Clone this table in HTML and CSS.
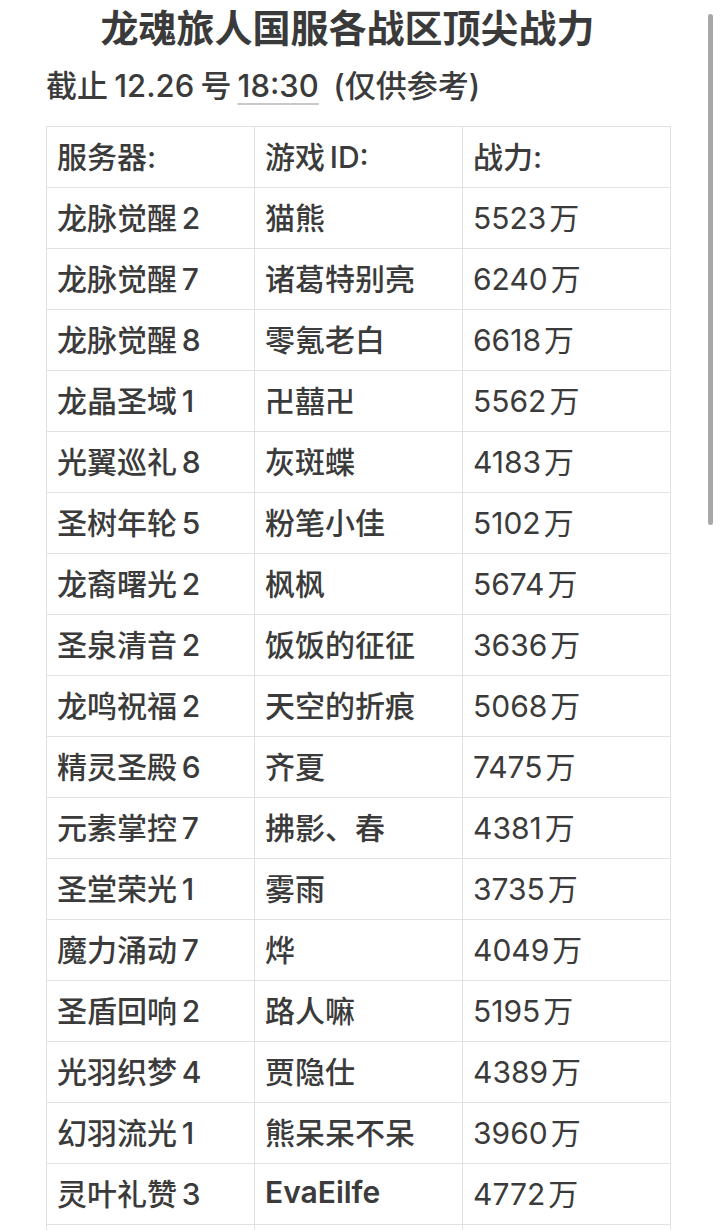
FILE: index.html
```html
<!DOCTYPE html>
<html lang="zh-CN">
<head>
<meta charset="utf-8">
<title>龙魂旅人国服各战区顶尖战力</title>
<link rel="stylesheet" href="styles.css">
</head>
<body>
<main class="page">
  <h1 class="title">龙魂旅人国服各战区顶尖战力</h1>
  <p class="subtitle">截止<span class="gap">12.26</span>号<span class="gap time">18:30</span> (仅供参考)</p>
  <table class="rank">
    <thead>
      <tr><th>服务器:</th><th>游戏<span class="gl">ID:</span></th><th>战力:</th></tr>
    </thead>
    <tbody>
      <tr><td>龙脉觉醒<span class="gl">2</span></td><td>猫熊</td><td><span class="gr">5523</span>万</td></tr>
      <tr><td>龙脉觉醒<span class="gl">7</span></td><td>诸葛特别亮</td><td><span class="gr">6240</span>万</td></tr>
      <tr><td>龙脉觉醒<span class="gl">8</span></td><td>零氪老白</td><td><span class="gr">6618</span>万</td></tr>
      <tr><td>龙晶圣域<span class="gl">1</span></td><td>卍囍卍</td><td><span class="gr">5562</span>万</td></tr>
      <tr><td>光翼巡礼<span class="gl">8</span></td><td>灰斑蝶</td><td><span class="gr">4183</span>万</td></tr>
      <tr><td>圣树年轮<span class="gl">5</span></td><td>粉笔小佳</td><td><span class="gr">5102</span>万</td></tr>
      <tr><td>龙裔曙光<span class="gl">2</span></td><td>枫枫</td><td><span class="gr">5674</span>万</td></tr>
      <tr><td>圣泉清音<span class="gl">2</span></td><td>饭饭的征征</td><td><span class="gr">3636</span>万</td></tr>
      <tr><td>龙鸣祝福<span class="gl">2</span></td><td>天空的折痕</td><td><span class="gr">5068</span>万</td></tr>
      <tr><td>精灵圣殿<span class="gl">6</span></td><td>齐夏</td><td><span class="gr">7475</span>万</td></tr>
      <tr><td>元素掌控<span class="gl">7</span></td><td>拂影、春</td><td><span class="gr">4381</span>万</td></tr>
      <tr><td>圣堂荣光<span class="gl">1</span></td><td>雾雨</td><td><span class="gr">3735</span>万</td></tr>
      <tr><td>魔力涌动<span class="gl">7</span></td><td>烨</td><td><span class="gr">4049</span>万</td></tr>
      <tr><td>圣盾回响<span class="gl">2</span></td><td>路人嘛</td><td><span class="gr">5195</span>万</td></tr>
      <tr><td>光羽织梦<span class="gl">4</span></td><td>贾隐仕</td><td><span class="gr">4389</span>万</td></tr>
      <tr><td>幻羽流光<span class="gl">1</span></td><td>熊呆呆不呆</td><td><span class="gr">3960</span>万</td></tr>
      <tr><td>灵叶礼赞<span class="gl">3</span></td><td class="latin">EvaEilfe</td><td><span class="gr">4772</span>万</td></tr>
      <tr><td></td><td></td><td></td></tr>
    </tbody>
  </table>
</main>
<div class="scrollbar" aria-hidden="true"></div>
</body>
</html>
```

FILE: styles.css
```css
html, body {
  margin: 0;
  padding: 0;
  background: #ffffff;
  overflow: hidden;
}

body {
  font-family: "Inter", "Noto Sans CJK SC", sans-serif;
  color: #3b3b3b;
}

.page {
  padding: 0 49px 0 46px;
}

.title {
  margin: 0;
  padding: 3px 22px 0 0;
  font-family: "Noto Sans CJK SC", sans-serif;
  font-size: 38px;
  line-height: 46px;
  font-weight: 700;
  text-align: center;
  color: #3a3a3a;
}

.subtitle {
  margin: 0;
  padding-top: 17px;
  font-size: 31px;
  line-height: 40px;
  font-weight: 500;
}

.gap {
  margin: 0 0.2em;
}

.time {
  text-decoration: underline;
  text-decoration-color: #c8c8c8;
  text-decoration-thickness: 2px;
  text-underline-offset: 6px;
}

.rank {
  margin-top: 20px;
  width: 100%;
  border-collapse: collapse;
  table-layout: fixed;
}

.rank th,
.rank td {
  border: 1px solid #e2e2e2;
  height: 61px;
  padding: 0 10px 4px;
  font-size: 30px;
  font-weight: 500;
  text-align: left;
  vertical-align: middle;
  white-space: nowrap;
  box-sizing: border-box;
}

.rank td:nth-child(3) {
  font-weight: 400;
}

.gl {
  margin-left: 0.16em;
}

.gr {
  margin-right: 0.1em;
}

.rank td.latin {
  font-family: "Inter", "Noto Sans", sans-serif;
  font-weight: 600;
}

.scrollbar {
  position: fixed;
  top: 14px;
  left: 708px;
  width: 5px;
  height: 511px;
  border-radius: 3px;
  background: #a8a8a8;
}
```
